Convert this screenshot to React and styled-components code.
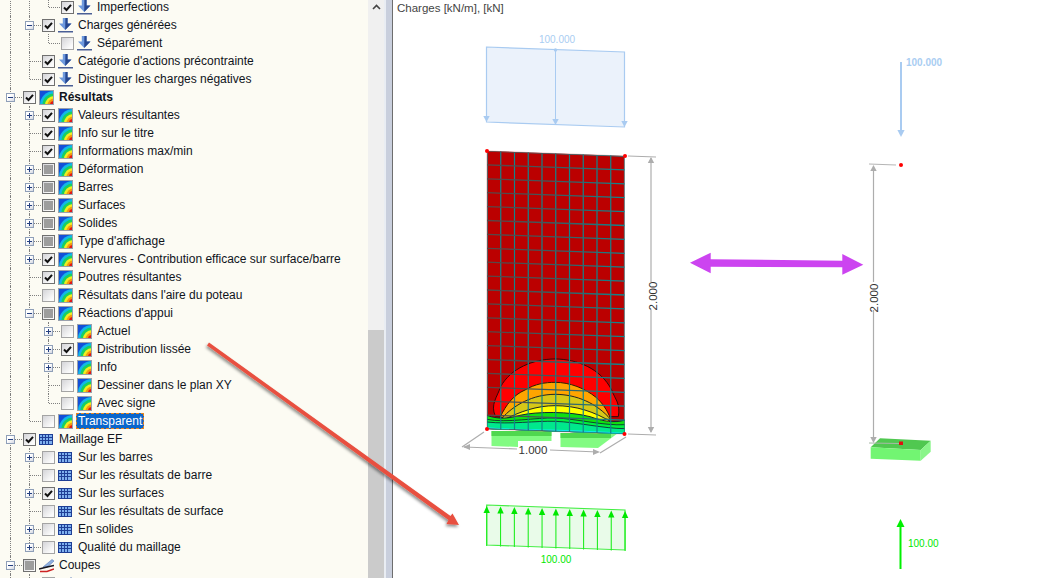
import styled, { createGlobalStyle } from "styled-components";

const GlobalStyle = createGlobalStyle`
  html, body {
    margin: 0;
    padding: 0;
    background: #fff;
  }
  body {
    font-family: "Liberation Sans", Arial, sans-serif;
  }
`;

const Page = styled.div`
  position: relative;
  display: flex;
  width: 1038px;
  height: 578px;
  overflow: hidden;
`;

const TreePanel = styled.div`
  width: 368px;
  flex: none;
  overflow: hidden;
  background: #fcfbf3;
`;

const Tree = styled.div`
  margin-top: -2px;
  padding-left: 1px;
`;

const Row = styled.div`
  display: flex;
  align-items: center;
  height: 18px;
`;

const Guide = styled.span`
  position: relative;
  flex: none;
  width: 19px;
  height: 18px;

  &::before {
    content: ${(p) => (p.kind === "none" ? "none" : '""')};
    position: absolute;
    left: 9px;
    top: 0;
    bottom: ${(p) => (p.kind === "ell" ? "9px" : "0")};
    border-left: 1px dotted #808080;
  }

  &::after {
    content: ${(p) => (p.kind === "tee" || p.kind === "ell" ? '""' : "none")};
    position: absolute;
    left: 10px;
    right: -2px;
    top: 9px;
    border-top: 1px dotted #808080;
  }
`;

const Expander = styled.span`
  position: absolute;
  z-index: 1;
  left: 5px;
  top: 5px;
  width: 9px;
  height: 9px;
  box-sizing: border-box;
  border: 1px solid #8f9fb8;
  background: linear-gradient(135deg, #fff 40%, #d5d8e2);

  &::before {
    content: "";
    position: absolute;
    left: 1px;
    right: 1px;
    top: 3px;
    height: 1px;
    background: #243f80;
  }

  &::after {
    content: ${(p) => (p.open ? "none" : '""')};
    position: absolute;
    top: 1px;
    bottom: 1px;
    left: 3px;
    width: 1px;
    background: #243f80;
  }
`;

const CheckBox = styled.span`
  position: relative;
  z-index: 1;
  flex: none;
  display: flex;
  align-items: center;
  justify-content: center;
  width: 13px;
  height: 13px;
  margin-left: 3px;
  box-sizing: border-box;
  border: 1px solid ${(p) => (p.state === "off" ? "#a4a4a4" : "#707070")};
  background: linear-gradient(135deg, #d4d4d8, #fbfbfb 80%);
`;

const PartialMark = styled.span`
  width: 9px;
  height: 9px;
  background: #9d9d9d;
`;

const IconSlot = styled.span`
  flex: none;
  display: flex;
  width: 15px;
  height: 15px;
  margin-left: 3px;
`;

const Label = styled.span`
  margin-left: ${(p) => (p.selected ? "3px" : "5px")};
  padding: ${(p) => (p.selected ? "1px 2px" : "0")};
  font-size: 12px;
  line-height: 14px;
  white-space: nowrap;
  font-weight: ${(p) => (p.bold ? 700 : 400)};
  color: ${(p) => (p.selected ? "#fff" : "#10141c")};
  background: ${(p) => (p.selected ? "#0a66cc" : "transparent")};
  outline: ${(p) => (p.selected ? "1px dashed #e8851e" : "none")};
  outline-offset: -1px;
`;

const ScrollBar = styled.div`
  width: 16px;
  flex: none;
  display: flex;
  flex-direction: column;
  background: #f0f0f0;
`;

const ScrollButton = styled.div`
  display: flex;
  justify-content: center;
  padding-top: 4px;
  height: 330px;
  box-sizing: border-box;
`;

const ScrollThumb = styled.div`
  flex: 1;
  background: #cbcbcb;
`;

const Splitter = styled.div`
  width: 9px;
  flex: none;
  box-sizing: border-box;
  background: #c9cfdd;
  border-left: 2px solid #e9edf3;
  border-right: 1px solid #6e6e6e;
`;

const Viewport = styled.div`
  position: relative;
  flex: 1;
  background: #fff;
`;

const Caption = styled.div`
  position: absolute;
  left: 4px;
  top: 1px;
  font-size: 11.5px;
  line-height: 14px;
  color: #444;
`;

const Canvas = styled.svg`
  display: block;
  width: 645px;
  height: 578px;
`;

const Value = styled.text`
  font-family: "Liberation Sans", Arial, sans-serif;
  font-size: ${(p) => p.size || 10}px;
  font-weight: ${(p) => (p.bold ? 700 : 400)};
  fill: ${(p) => p.tone};
  text-anchor: ${(p) => p.anchor || "middle"};
`;

const Overlay = styled.svg`
  position: absolute;
  left: 0;
  top: 0;
  width: 1038px;
  height: 578px;
  pointer-events: none;
`;

const CheckMark = () => (
  <svg width="9" height="9" viewBox="0 0 9 9">
    <path d="M1 4.5 L3.5 7 L8 1.8" fill="none" stroke="#111" strokeWidth="2" />
  </svg>
);

const ResultIcon = () => (
  <svg width="15" height="15" viewBox="0 0 15 15">
    <rect x="0" y="0" width="15" height="15" fill="#1450d8" />
    <circle cx="15" cy="15" r="14" fill="#12b8e8" />
    <circle cx="15" cy="15" r="11.5" fill="#18d060" />
    <circle cx="15" cy="15" r="9" fill="#f2ee20" />
    <circle cx="15" cy="15" r="6.5" fill="#f49a10" />
    <circle cx="15" cy="15" r="4" fill="#e01818" />
    <rect x="0.5" y="0.5" width="14" height="14" fill="none" stroke="#9aa0ac" />
  </svg>
);

const LoadIcon = () => (
  <svg width="15" height="15" viewBox="0 0 15 15">
    <path d="M4.8 0 H9.6 V5.5 H13.5 L7.2 12 L1 5.5 H4.8 Z" fill="#6f9ade" />
    <path d="M7.4 0 H9.6 V5.5 H13.5 L7.2 12 Z" fill="#26478f" />
    <rect x="0" y="13" width="15" height="1.5" fill="#4a5f96" />
  </svg>
);

const MeshIcon = () => (
  <svg width="15" height="15" viewBox="0 0 15 15">
    <rect x="0.5" y="2.5" width="13" height="10" fill="#7fb0ee" stroke="#1f3f96" />
    <path d="M3.5 2.5 V12.5 M6.5 2.5 V12.5 M9.5 2.5 V12.5 M0.5 5.5 H13.5 M0.5 8.5 H13.5" stroke="#1f3f96" strokeWidth="1" />
  </svg>
);

const SectionIcon = () => (
  <svg width="15" height="15" viewBox="0 0 15 15">
    <path d="M4 9 L13 1.5 L15 3 L8 9.5 Z" fill="#8fb0e0" stroke="#5c7cb8" strokeWidth="0.6" />
    <path d="M0 11 L8 9 L15 7.5" stroke="#15151f" strokeWidth="1.6" fill="none" />
    <path d="M1 13.5 H8 L15 11" stroke="#cc2222" strokeWidth="1.5" fill="none" />
  </svg>
);

const icons = {
  result: ResultIcon,
  load: LoadIcon,
  mesh: MeshIcon,
  section: SectionIcon,
};

const rows = [
  { guides: ["pipe", "pipe", "ell"], state: "on", icon: "load", label: "Imperfections" },
  { guides: ["pipe", "tee"], exp: "open", state: "on", icon: "load", label: "Charges générées" },
  { guides: ["pipe", "pipe", "ell"], state: "off", icon: "load", label: "Séparément" },
  { guides: ["pipe", "tee"], state: "on", icon: "load", label: "Catégorie d'actions précontrainte" },
  { guides: ["pipe", "ell"], state: "on", icon: "load", label: "Distinguer les charges négatives" },
  { guides: ["tee"], exp: "open", state: "on", icon: "result", label: "Résultats", bold: true },
  { guides: ["pipe", "tee"], exp: "closed", state: "on", icon: "result", label: "Valeurs résultantes" },
  { guides: ["pipe", "tee"], state: "on", icon: "result", label: "Info sur le titre" },
  { guides: ["pipe", "tee"], state: "on", icon: "result", label: "Informations max/min" },
  { guides: ["pipe", "tee"], exp: "closed", state: "mixed", icon: "result", label: "Déformation" },
  { guides: ["pipe", "tee"], exp: "closed", state: "mixed", icon: "result", label: "Barres" },
  { guides: ["pipe", "tee"], exp: "closed", state: "mixed", icon: "result", label: "Surfaces" },
  { guides: ["pipe", "tee"], exp: "closed", state: "mixed", icon: "result", label: "Solides" },
  { guides: ["pipe", "tee"], exp: "closed", state: "mixed", icon: "result", label: "Type d'affichage" },
  { guides: ["pipe", "tee"], exp: "closed", state: "on", icon: "result", label: "Nervures - Contribution efficace sur surface/barre" },
  { guides: ["pipe", "tee"], state: "on", icon: "result", label: "Poutres résultantes" },
  { guides: ["pipe", "tee"], state: "off", icon: "result", label: "Résultats dans l'aire du poteau" },
  { guides: ["pipe", "tee"], exp: "open", state: "mixed", icon: "result", label: "Réactions d'appui" },
  { guides: ["pipe", "pipe", "tee"], exp: "closed", state: "off", icon: "result", label: "Actuel" },
  { guides: ["pipe", "pipe", "tee"], exp: "closed", state: "on", icon: "result", label: "Distribution lissée" },
  { guides: ["pipe", "pipe", "tee"], exp: "closed", state: "off", icon: "result", label: "Info" },
  { guides: ["pipe", "pipe", "tee"], state: "off", icon: "result", label: "Dessiner dans le plan XY" },
  { guides: ["pipe", "pipe", "ell"], state: "off", icon: "result", label: "Avec signe" },
  { guides: ["pipe", "ell"], state: "off", icon: "result", label: "Transparent", selected: true },
  { guides: ["tee"], exp: "open", state: "on", icon: "mesh", label: "Maillage EF" },
  { guides: ["pipe", "tee"], exp: "closed", state: "off", icon: "mesh", label: "Sur les barres" },
  { guides: ["pipe", "tee"], state: "off", icon: "mesh", label: "Sur les résultats de barre" },
  { guides: ["pipe", "tee"], exp: "closed", state: "on", icon: "mesh", label: "Sur les surfaces" },
  { guides: ["pipe", "tee"], state: "off", icon: "mesh", label: "Sur les résultats de surface" },
  { guides: ["pipe", "tee"], exp: "closed", state: "off", icon: "mesh", label: "En solides" },
  { guides: ["pipe", "ell"], exp: "closed", state: "off", icon: "mesh", label: "Qualité du maillage" },
  { guides: ["tee"], exp: "open", state: "mixed", icon: "section", label: "Coupes" },
  { guides: ["pipe", "tee"], state: "off", icon: "section", label: "" },
];

const TreeRow = ({ row }) => {
  const Icon = icons[row.icon];
  return (
    <Row>
      {row.guides.map((kind, i) => (
        <Guide key={i} kind={kind}>
          {i === row.guides.length - 1 && row.exp && <Expander open={row.exp === "open"} />}
        </Guide>
      ))}
      <CheckBox state={row.state}>
        {row.state === "on" && <CheckMark />}
        {row.state === "mixed" && <PartialMark />}
      </CheckBox>
      <IconSlot>
        <Icon />
      </IconSlot>
      {row.label && (
        <Label bold={row.bold} selected={row.selected}>
          {row.label}
        </Label>
      )}
    </Row>
  );
};

const range = (n) => Array.from({ length: n }, (_, i) => i);

const Dot = ({ x, y }) => <circle cx={x} cy={y} r="2" fill="#ff0000" />;

const DownHead = ({ x, y, color, w = 3.2, h = 6 }) => (
  <path d={`M${x - w} ${y - h} H${x + w} L${x} ${y} Z`} fill={color} />
);

const UpHead = ({ x, y, color, w = 3.2, h = 6 }) => (
  <path d={`M${x - w} ${y + h} H${x + w} L${x} ${y} Z`} fill={color} />
);

const BlueLoad = () => (
  <g>
    <path d="M486.5 47 L624.5 52 V127 L486.5 122 Z" fill="#ebf2fb" stroke="#a9cbf1" strokeWidth="1.2" />
    <line x1="555.5" y1="50" x2="555.5" y2="124" stroke="#a9cbf1" />
    <circle cx="555.5" cy="50" r="1.7" fill="#a9cbf1" />
    <DownHead x={486.5} y={122} color="#a9cbf1" />
    <DownHead x={555.5} y={125} color="#a9cbf1" />
    <DownHead x={624.5} y={127} color="#a9cbf1" />
    <Value x="557" y="43" size={10} tone="#a9cdf2">100.000</Value>
  </g>
);

const Wall = () => {
  const xTop = (k) => 487 + k * 13.75;
  return (
    <g>
      <defs>
        <linearGradient id="meshRow" x1="0" y1="0" x2="1" y2="0">
          <stop offset="0" stopColor="#5b4444" />
          <stop offset="0.5" stopColor="#3c5c60" />
          <stop offset="1" stopColor="#10868e" />
        </linearGradient>
        <clipPath id="wallClip">
          <path d="M487 151 L624.5 156 V434 L487 429 Z" />
        </clipPath>
      </defs>
      <path d="M487 151 L624.5 156 V434 L487 429 Z" fill="#bb0000" stroke="#e08a8a" strokeWidth="0.6" />
      <g clipPath="url(#wallClip)">
        <g transform="translate(470 340) scale(0.3333)">
          <path d="M76 228 C60 195 82 170 92 140 C122 85 190 57 255 57 C320 57 392 85 425 150 C435 178 452 190 445 230 Z" fill="#ff0000" stroke="#2a0a0a" strokeWidth="3" />
          <path d="M90 232 C108 195 130 165 165 150 C195 132 225 127 255 127 C300 127 345 145 378 172 C398 190 410 208 422 236 Z" fill="#ffa500" stroke="#2a1a00" strokeWidth="3" />
          <path d="M95 236 C130 195 190 163 255 163 C320 163 380 190 422 238 Z" fill="#d6c818" stroke="#222" strokeWidth="3" />
          <path d="M100 240 C150 215 200 197 255 197 C320 197 372 215 428 248 Z" fill="#ffff00" stroke="#222" strokeWidth="3" />
          <path d="M50 226 C90 240 120 234 150 226 C200 214 300 214 360 230 C400 244 432 250 466 240 V285 L50 268 Z" fill="#10e010" stroke="#123" strokeWidth="3" />
          <path d="M50 238 C110 250 200 232 255 234 C320 236 400 258 466 254 V285 L50 268 Z" fill="#00f040" stroke="#123" strokeWidth="2.5" />
          <path d="M50 246 C120 254 200 242 255 244 C320 246 400 266 466 266 V285 L50 268 Z" fill="#00e88c" stroke="#123" strokeWidth="2.5" />
          <path d="M50 262 C120 268 260 266 466 278 V290 L50 272 Z" fill="#10e8f0" />
        </g>
        {range(11).map((k) => (
          <line key={k} x1={xTop(k)} y1="145" x2={xTop(k)} y2="440" stroke="#12858c" strokeWidth="1.2" />
        ))}
        {range(21).map((k) => (
          <line key={k} x1="487" y1={151 + k * 13.9} x2="625" y2={156 + k * 13.9} stroke="url(#meshRow)" strokeWidth="1.3" />
        ))}
      </g>
      <Dot x={487} y={151} />
      <Dot x={625} y={156} />
      <Dot x={487} y={429} />
      <Dot x={624.5} y={434} />
    </g>
  );
};

const Supports = () => (
  <g>
    <path d="M491.5 431 H551.5 V441 H518 V447 L491.5 446 Z" fill="#82fb82" />
    <path d="M491.5 431 H551.5 V436 H491.5 Z" fill="#4fd84f" />
    <path d="M560.5 433 H618 L598 448 L560.5 447 Z" fill="#82fb82" />
    <path d="M560.5 433 H611 V438 H560.5 Z" fill="#4fd84f" />
  </g>
);

const WallDimensions = () => (
  <g stroke="#adadad" strokeWidth="1.2" fill="none">
    <line x1="628" y1="156" x2="656" y2="157" />
    <line x1="628" y1="434" x2="656" y2="435" />
    <line x1="651" y1="158" x2="651" y2="282" />
    <line x1="651" y1="310" x2="651" y2="432" />
    <line x1="484" y1="432" x2="462" y2="447" />
    <line x1="626" y1="437" x2="600" y2="453" />
    <line x1="464" y1="447" x2="517" y2="449" />
    <line x1="550" y1="450" x2="598" y2="452" />
  </g>
);

const WallDimensionMarks = () => (
  <g>
    <UpHead x={651} y={157} color="#adadad" />
    <DownHead x={651} y={433} color="#adadad" />
    <path d="M463 447 L470 444 V450 Z" fill="#adadad" />
    <path d="M600 452 L593 449 V455 Z" fill="#adadad" />
    <Value x="533" y="454" size={11.5} tone="#333">1.000</Value>
    <Value transform="translate(657 296) rotate(-90)" size={11.5} tone="#333">2.000</Value>
  </g>
);

const DoubleArrow = () => (
  <path
    d="M690 262.7 L710.7 252.7 V259.3 L842.3 260.7 V254 L863.3 264.7 L842.3 274.7 V267.3 L710.7 266.7 V273.3 Z"
    fill="#cc44f0"
  />
);

const SideView = () => (
  <g>
    <line x1="901" y1="62" x2="901" y2="132" stroke="#a9cbf1" strokeWidth="2" />
    <DownHead x={901} y={137} color="#a9cbf1" w={3.6} h={7} />
    <Value x="906" y="66" size={10} bold anchor="start" tone="#a9cdf2">100.000</Value>

    <line x1="869" y1="164" x2="896" y2="165" stroke="#b5b5b5" />
    <Dot x={901} y={165} />
    <line x1="873.5" y1="168" x2="873.5" y2="282" stroke="#adadad" strokeWidth="1.2" />
    <line x1="873.5" y1="310" x2="873.5" y2="438" stroke="#adadad" strokeWidth="1.2" />
    <UpHead x={873.5} y={165} color="#adadad" />
    <Value transform="translate(877.5 298) rotate(-90)" size={11.5} tone="#333">2.000</Value>

    <path d="M870.7 447.3 L880 438.3 L930.7 440.7 L920.7 450 Z" fill="#50c850" />
    <path d="M870.7 447.3 L920.7 450 V460.7 L870.7 458.7 Z" fill="#72f572" />
    <path d="M920.7 450 L930.7 440.7 V451.7 L920.7 460.7 Z" fill="#8af58a" />
    <DownHead x={873.5} y={443} color="#adadad" />
    <line x1="869" y1="443" x2="900" y2="443.5" stroke="#a8b8a8" />
    <rect x="899" y="441.5" width="4" height="3.5" fill="#e01010" />

    <line x1="900.5" y1="569" x2="900.5" y2="525" stroke="#00f000" strokeWidth="2" />
    <UpHead x={900.5} y={519} color="#00f000" w={4} h={8} />
    <Value x="908" y="547" size={10} anchor="start" tone="#00e800">100.00</Value>
  </g>
);

const GreenLoad = () => {
  const span = 138.4;
  return (
    <g>
      <path d="M486.7 505 L625 510 V550 L486.7 545 Z" fill="#e9fbe9" stroke="#44ee44" strokeWidth="1.2" />
      {range(11).map((k) => {
        const x = 486.7 + (k * span) / 10;
        const top = 506 + k * 0.5;
        return (
          <g key={k}>
            <line x1={x} y1={top + 4} x2={x} y2={top + 40} stroke="#22ee22" strokeWidth="1.1" />
            <UpHead x={x} y={top} color="#00e800" w={3.2} h={7} />
          </g>
        );
      })}
      <Value x="556" y="563" size={10} tone="#00e800">100.00</Value>
    </g>
  );
};

const App = () => (
  <>
    <GlobalStyle />
    <Page>
      <TreePanel>
        <Tree>
          {rows.map((row, i) => (
            <TreeRow key={i} row={row} />
          ))}
        </Tree>
      </TreePanel>
      <ScrollBar>
        <ScrollButton>
          <svg width="9" height="6" viewBox="0 0 9 6">
            <path d="M1 5 L4.5 1.5 L8 5" fill="none" stroke="#444" strokeWidth="1.6" />
          </svg>
        </ScrollButton>
        <ScrollThumb />
      </ScrollBar>
      <Splitter />
      <Viewport>
        <Canvas viewBox="393 0 645 578">
          <BlueLoad />
          <Supports />
          <Wall />
          <WallDimensions />
          <WallDimensionMarks />
          <DoubleArrow />
          <SideView />
          <GreenLoad />
        </Canvas>
        <Caption>Charges [kN/m], [kN]</Caption>
      </Viewport>
      <Overlay viewBox="0 0 1038 578">
        <defs>
          <filter id="arrowShadow" x="-10%" y="-10%" width="120%" height="120%">
            <feDropShadow dx="-1" dy="2" stdDeviation="1.6" floodColor="#000" floodOpacity="0.45" />
          </filter>
        </defs>
        <path
          d="M209 342.5 L450.5 516 L452.5 513.5 L459 525 L446.5 524 L448.5 520 L207 345.5 Z"
          fill="#e8503f"
          filter="url(#arrowShadow)"
        />
      </Overlay>
    </Page>
  </>
);

export default App;
